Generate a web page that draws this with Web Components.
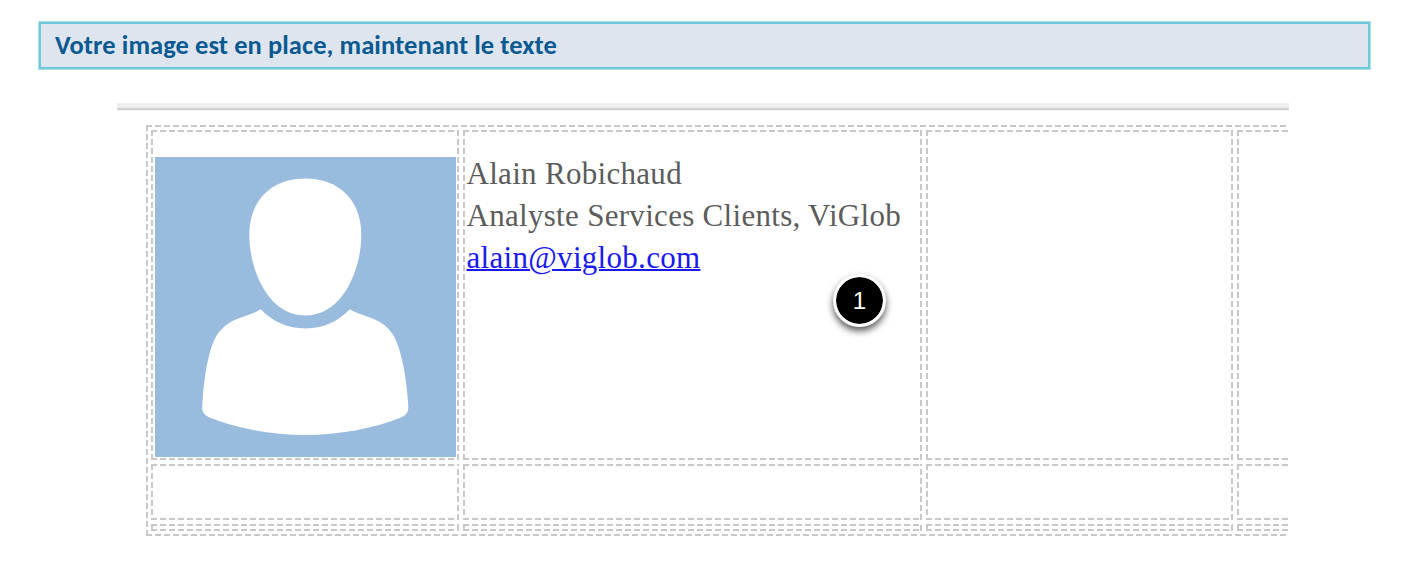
<!DOCTYPE html>
<html lang="fr">
<head>
<meta charset="utf-8">
<title>Signature</title>
<style>
  body {
    margin: 0;
    height: 572px;
    overflow: hidden;
    background: #fff;
    font-family: "Liberation Serif", "Times New Roman", serif;
  }
</style>
</head>
<body>
<step-banner>Votre image est en place, maintenant le texte</step-banner>
<editor-frame>
  <signature-table>
    <table-cell><user-avatar></user-avatar></table-cell>
    <table-cell>
      <contact-card name="Alain Robichaud" role-title="Analyste Services Clients, ViGlob" email="alain@viglob.com"></contact-card>
      <step-marker>1</step-marker>
    </table-cell>
    <table-cell></table-cell>
    <table-cell></table-cell>
    <table-cell></table-cell>
    <table-cell></table-cell>
    <table-cell></table-cell>
    <table-cell></table-cell>
    <table-cell></table-cell>
    <table-cell></table-cell>
    <table-cell></table-cell>
    <table-cell></table-cell>
  </signature-table>
</editor-frame>

<script>
// dashed outline shared by the table and its cells
const dashes = `
  --line: #c8c8c8;
  background:
    repeating-linear-gradient(90deg, var(--line) 0 6px, transparent 6px 9px) 0 0 / 100% 2px no-repeat,
    repeating-linear-gradient(90deg, var(--line) 0 6px, transparent 6px 9px) 0 100% / 100% 2px no-repeat,
    repeating-linear-gradient(180deg, var(--line) 0 6px, transparent 6px 9px) 0 0 / 2px 100% no-repeat,
    repeating-linear-gradient(0deg, var(--line) 0 6px, transparent 6px 9px) 100% 0 / 2px 100% no-repeat;
`;

class StepBanner extends HTMLElement {
  constructor() {
    super();
    this.attachShadow({ mode: "open" }).innerHTML = `
      <style>
        :host {
          display: flex;
          align-items: center;
          box-sizing: border-box;
          width: 1331px;
          height: 47px;
          margin: 22px 0 0 39px;
          padding: 0 0 2px 14px;
          border: 2px solid #6bcbda;
          box-shadow: 0 0 0 1px #b5dfe8;
          background: #dee5ef;
          color: #095a91;
          font: bold 26.5px Carlito, Lato, sans-serif;
          letter-spacing: 0.08px;
          white-space: nowrap;
        }
      </style>
      <span><slot></slot></span>
    `;
  }
}

class EditorFrame extends HTMLElement {
  constructor() {
    super();
    this.attachShadow({ mode: "open" }).innerHTML = `
      <style>
        :host {
          display: block;
          box-sizing: border-box;
          width: 1172px;
          height: 440px;
          margin: 34px 0 0 117px;
          overflow: hidden;
        }
        .bar {
          height: 5px;
          background: #efefef;
          border-bottom: 2px solid #d2d1cf;
          box-shadow: 0 1px #f1f1f0;
        }
        .content {
          padding: 15px 0 0 29px;
        }
      </style>
      <div class="bar"></div>
      <div class="content"><slot></slot></div>
    `;
  }
}

class SignatureTable extends HTMLElement {
  constructor() {
    super();
    this.attachShadow({ mode: "open" }).innerHTML = `
      <style>
        :host {
          display: grid;
          box-sizing: border-box;
          grid-template-columns: 308px 459px 307px 307px;
          grid-template-rows: 330px 56px 7px;
          gap: 4px;
          width: 1403px;
          height: 411px;
          padding: 5px;
          ${dashes}
        }
      </style>
      <slot></slot>
    `;
  }
}

class TableCell extends HTMLElement {
  constructor() {
    super();
    this.attachShadow({ mode: "open" }).innerHTML = `
      <style>
        :host {
          display: block;
          position: relative;
          box-sizing: border-box;
          min-width: 0;
          ${dashes}
        }
      </style>
      <slot></slot>
    `;
  }
}

class UserAvatar extends HTMLElement {
  constructor() {
    super();
    this.attachShadow({ mode: "open" }).innerHTML = `
      <style>
        :host {
          display: block;
          width: 301px;
          height: 300px;
          margin: 27px 0 0 4px;
          background: #99bbde;
        }
        svg {
          display: block;
        }
      </style>
      <svg width="301" height="300" viewBox="0 0 301 300" fill="#fff">
        <path d="M150.3 21.5C184 21.5 206.3 43 206.3 78C206.3 112 188 158.5 150.3 158.5C112.600 158.500 94.300 112 94.300 78C94.300 43 116.600 21.500 150.300 21.500Z"/>
        <path d="M105.800 152.300C118 165 133 171.400 150.300 171.400C168 171.400 182.500 165 194.800 152.300C204 158 213 159 222 163.500C232 168.500 239 176 243.500 190C249 207 252 228 253.300 249C253.600 255 251.500 258 246 260.500C218 271.500 184 278 150.300 278C117 278 82 271.500 54.500 260.500C49 258 46.900 255 47.200 249C48.500 228 51 207 56.500 190C61 176 68.500 168.500 78.500 163.500C87.500 159 96.500 158 105.800 152.300Z"/>
      </svg>
    `;
  }
}

class ContactCard extends HTMLElement {
  connectedCallback() {
    const name = this.getAttribute("name") || "";
    const role = this.getAttribute("role-title") || "";
    const email = this.getAttribute("email") || "";

    this.attachShadow({ mode: "open" }).innerHTML = `
      <style>
        :host {
          display: block;
          padding: 23px 0 0 3.5px;
          color: #5c5c5c;
          font-size: 31px;
          letter-spacing: 0.3px;
          line-height: 42px;
          white-space: nowrap;
        }
        a {
          color: #1a1aee;
          text-decoration-thickness: 2px;
        }
      </style>
      <div>${name}</div>
      <div>${role}</div>
      <div><a href="mailto:${email}">${email}</a></div>
    `;
  }
}

class StepMarker extends HTMLElement {
  constructor() {
    super();
    this.attachShadow({ mode: "open" }).innerHTML = `
      <style>
        :host {
          position: absolute;
          left: 370px;
          top: 144px;
          display: flex;
          align-items: center;
          justify-content: center;
          box-sizing: border-box;
          width: 53px;
          height: 53px;
          border: 3px solid #fff;
          border-radius: 50%;
          background: #000 padding-box;
          box-shadow: 0 4px 7px rgba(0, 0, 0, 0.65);
          color: #fff;
          font: 24px "Liberation Sans", Arial, sans-serif;
        }
      </style>
      <slot></slot>
    `;
  }
}

customElements.define("step-banner", StepBanner);
customElements.define("editor-frame", EditorFrame);
customElements.define("signature-table", SignatureTable);
customElements.define("table-cell", TableCell);
customElements.define("user-avatar", UserAvatar);
customElements.define("contact-card", ContactCard);
customElements.define("step-marker", StepMarker);
</script>
</body>
</html>
